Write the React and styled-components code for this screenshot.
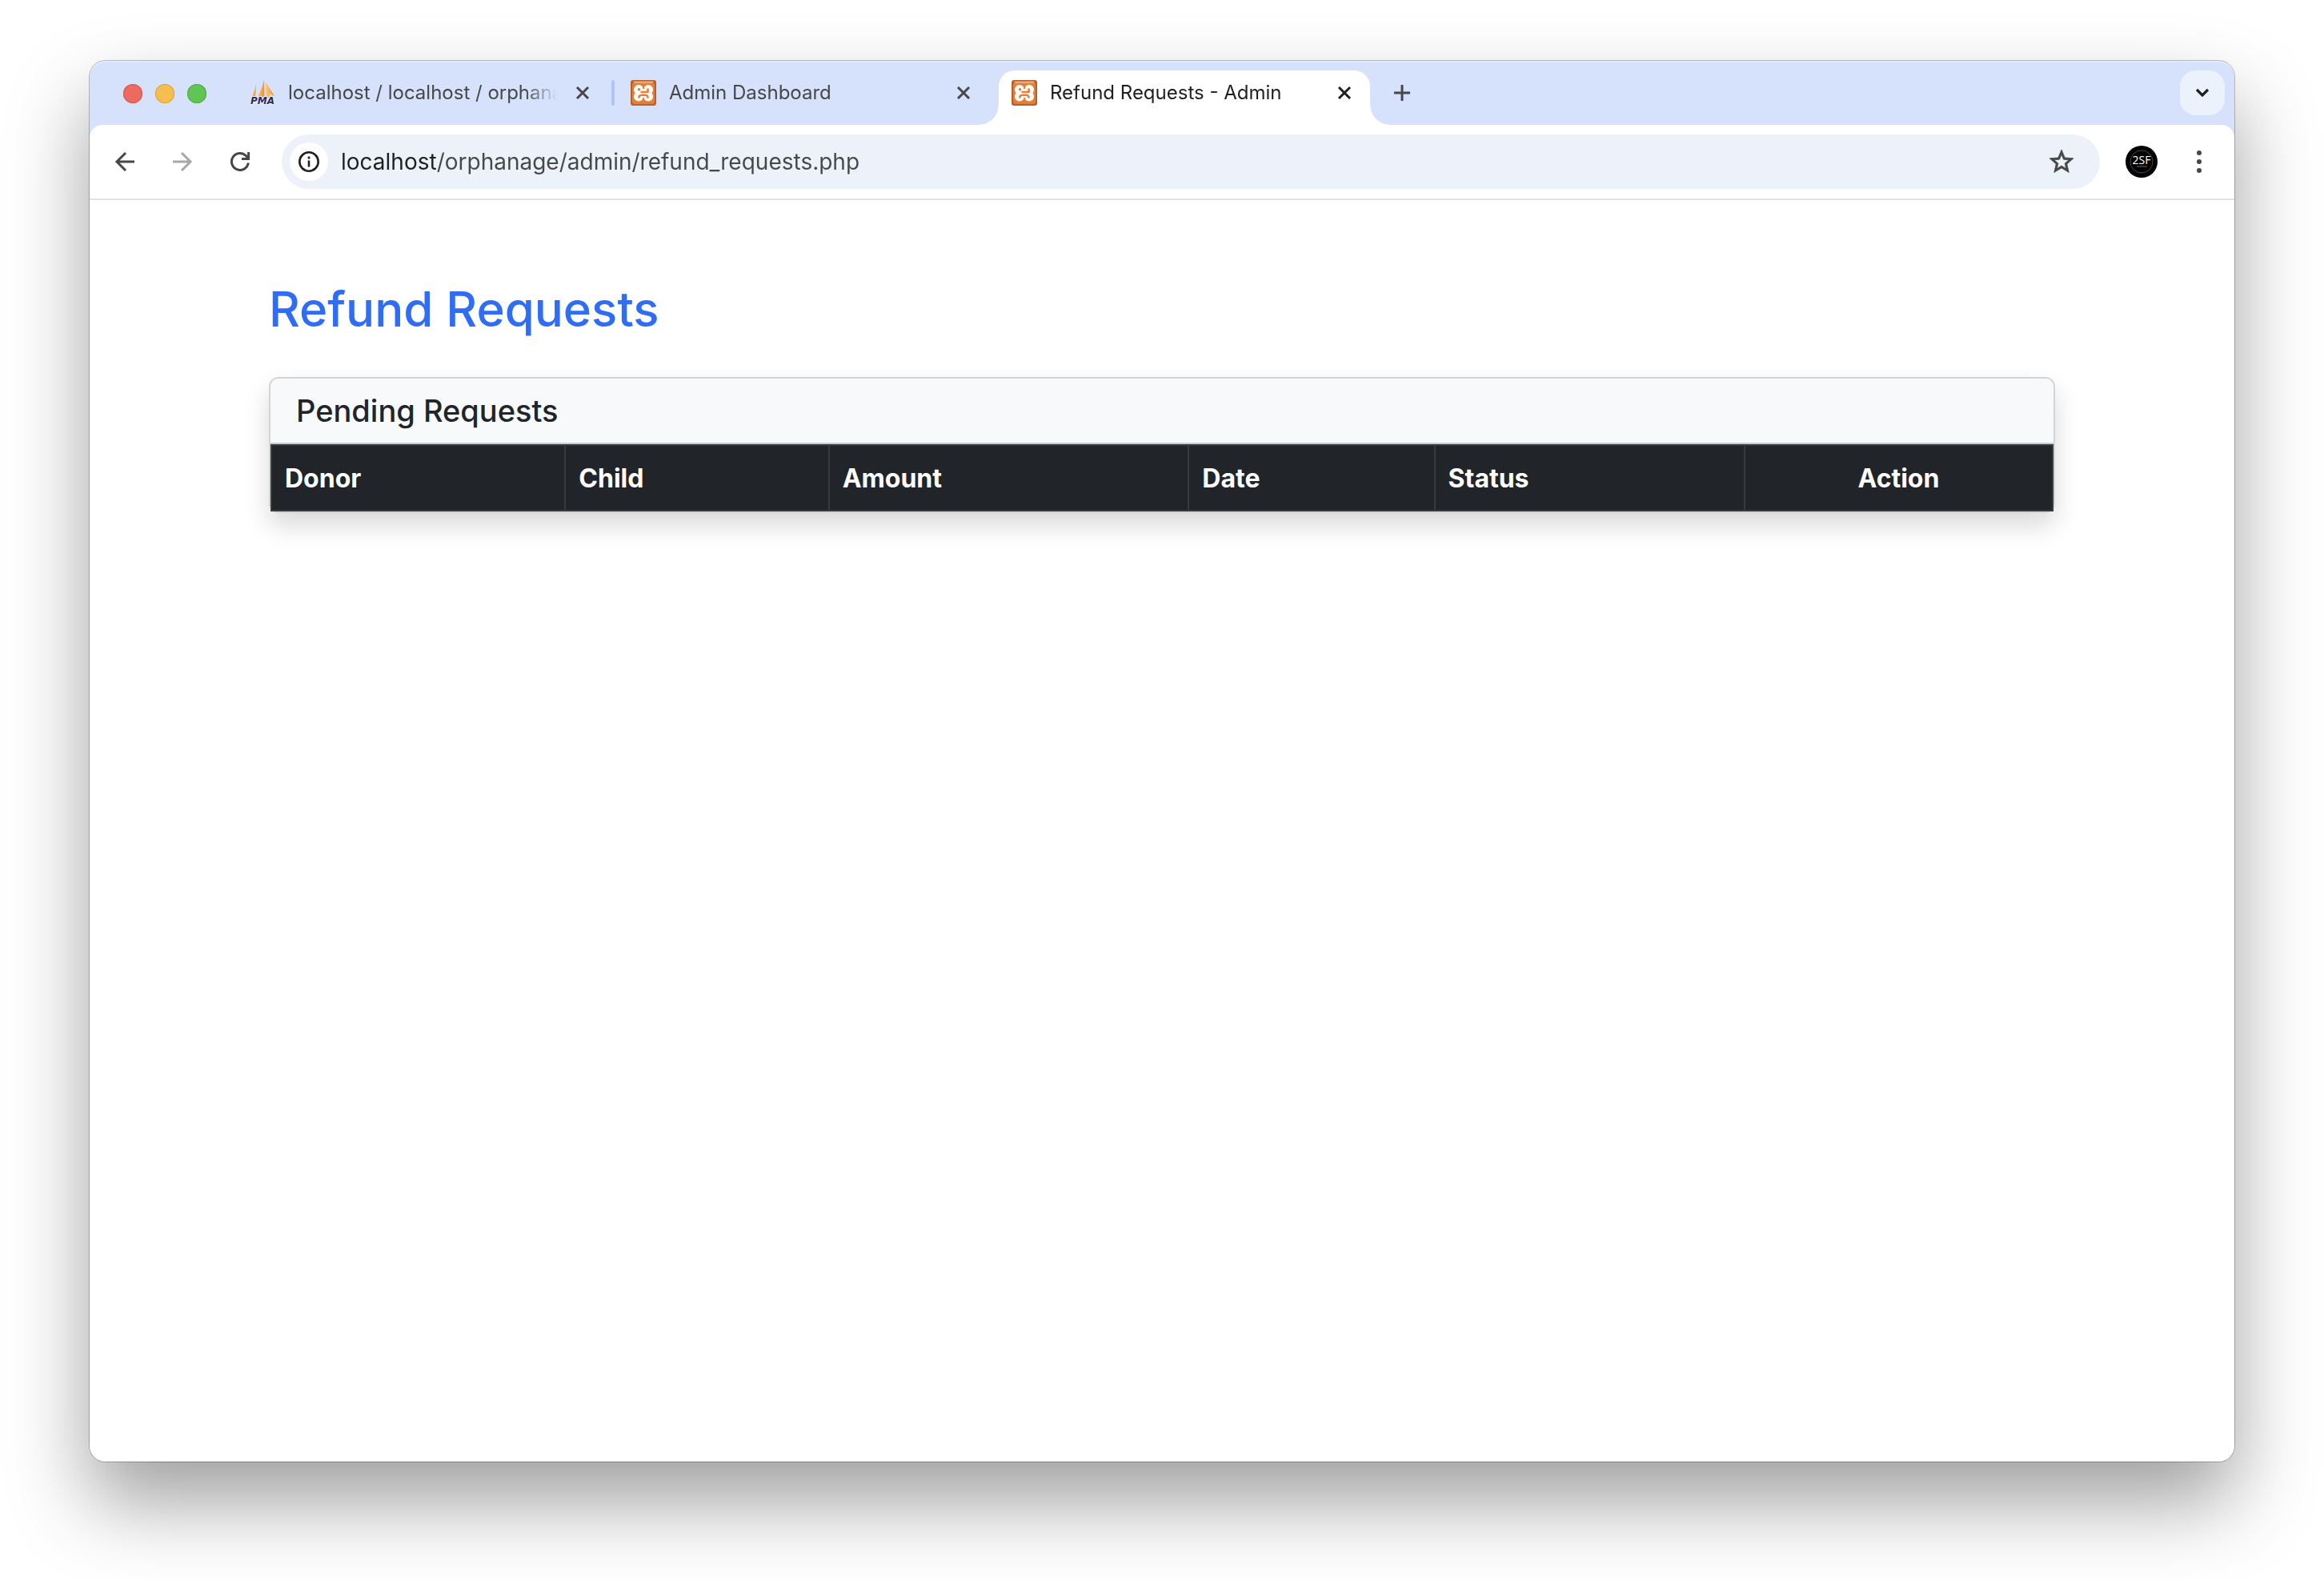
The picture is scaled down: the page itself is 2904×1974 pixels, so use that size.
import React, { useState } from "react";
import styled, { createGlobalStyle, css } from "styled-components";

const GlobalStyle = createGlobalStyle`
  *, *::before, *::after { box-sizing: border-box; }
  body {
    margin: 0;
    background: #ffffff;
    font-family: Inter, Roboto, "Liberation Sans", sans-serif;
    color: #212529;
  }
  button, input {
    margin: 0;
    padding: 0;
    border: 0;
    background: none;
    font: inherit;
    color: inherit;
  }
`;

/* ---------- window ---------- */

const Desktop = styled.div`
  display: flex;
  min-height: 100vh;
  padding: 76px 112px 148px;
`;

const BrowserWindow = styled.div`
  flex: 1;
  min-width: 0;
  display: flex;
  flex-direction: column;
  overflow: hidden;
  border-radius: 20px;
  background: #d6e1fc;
  box-shadow: 0 0 0 1px rgba(0, 0, 0, 0.24), 0 50px 100px rgba(0, 0, 0, 0.38);
`;

const TabStrip = styled.header`
  display: flex;
  align-items: flex-end;
  height: 80px;
  padding: 0 12px 0 42px;
  border-radius: 20px 20px 0 0;
  box-shadow: inset 0 2px 0 #e3ebfd;
`;

const WindowControls = styled.div`
  display: flex;
  align-items: center;
  gap: 16px;
  height: 80px;
  padding-top: 2px;
  margin-right: 38px;
`;

const WindowButton = styled.button`
  width: 24px;
  height: 24px;
  border-radius: 50%;
  background: ${(p) => p.$fill};
  box-shadow: inset 0 0 0 1px ${(p) => p.$ring};
`;

const TabList = styled.div`
  display: flex;
  align-items: flex-end;
`;

const Tab = styled.div`
  position: relative;
  display: flex;
  align-items: center;
  gap: 16px;
  width: 464px;
  height: 68px;
  padding: 0 16px 12px;
  color: #474747;

  ${(p) =>
    p.$active &&
    css`
      color: #1f1f1f;
      background: #ffffff;
      border-radius: 20px 20px 0 0;

      &::before,
      &::after {
        content: "";
        position: absolute;
        bottom: 0;
        width: 24px;
        height: 24px;
      }
      &::before {
        right: 100%;
        background: radial-gradient(circle at 0 0, transparent 23px, #ffffff 24px);
      }
      &::after {
        left: 100%;
        background: radial-gradient(circle at 100% 0, transparent 23px, #ffffff 24px);
      }
    `}
`;

const TabTitle = styled.button`
  flex: 1;
  min-width: 0;
  overflow: hidden;
  white-space: nowrap;
  text-align: left;
  font-size: 24px;
  line-height: 32px;
  mask-image: linear-gradient(to left, transparent, #000000 40px);
`;

const TabClose = styled.button`
  display: grid;
  place-items: center;
  width: 32px;
  height: 32px;
`;

const TabDivider = styled.span`
  width: 4px;
  height: 32px;
  margin: 0 4px 24px;
  border-radius: 2px;
  background: ${(p) => (p.$visible ? "#adc6f6" : "transparent")};
`;

const StripButton = styled.button`
  display: grid;
  place-items: center;
  width: 56px;
  height: 56px;
  margin: ${(p) => (p.$end ? "0 0 12px auto" : "0 0 12px 12px")};
  border-radius: 20px;
  color: ${(p) => (p.$end ? "#1f1f1f" : "#474747")};
  background: ${(p) => (p.$end ? "#ebf2fc" : "transparent")};
`;

/* ---------- toolbar ---------- */

const Toolbar = styled.form`
  display: flex;
  align-items: center;
  height: 94px;
  padding: 0 16px;
  border-bottom: 2px solid #e0e1e1;
  border-radius: 16px 16px 0 0;
  background: #ffffff;
`;

const NavButtons = styled.nav`
  display: flex;
  gap: 16px;
  margin-right: 24px;
`;

const IconButton = styled.button`
  display: grid;
  place-items: center;
  flex: none;
  width: 56px;
  height: 56px;
  color: #474747;

  &:disabled {
    color: #a8a8a8;
  }
`;

const AddressBar = styled.div`
  flex: 1;
  min-width: 0;
  display: flex;
  align-items: center;
  gap: 16px;
  height: 68px;
  padding: 0 20px 0 10px;
  border-radius: 34px;
  background: #edf2fa;
`;

const SiteInfo = styled.button`
  display: grid;
  place-items: center;
  flex: none;
  width: 48px;
  height: 48px;
  border-radius: 50%;
  color: #1f1f1f;
  background: #ffffff;
`;

const AddressInput = styled.input`
  flex: 1;
  min-width: 0;
  font-size: 28px;
  line-height: 36px;
  outline: none;
  background: linear-gradient(to right, #1f1f1f 120px, #474747 120px);
  background-clip: text;
  -webkit-text-fill-color: transparent;
`;

const Profile = styled.button`
  flex: none;
  width: 40px;
  height: 40px;
  margin: 0 24px 0 32px;

  svg {
    display: block;
  }
`;

/* ---------- page ---------- */

const Page = styled.main`
  flex: 1;
  background: #ffffff;
`;

const Container = styled.div`
  max-width: 2280px;
  margin: 0 auto;
  padding: 96px 24px 0;
`;

const PageTitle = styled.h1`
  margin: 0 0 46px;
  padding-top: 2px;
  font-size: 60px;
  line-height: 77px;
  font-weight: 500;
  color: #2f6df6;
`;

const Card = styled.section`
  border: 2px solid #d2d4d5;
  border-radius: 12px;
  background: #ffffff;
  box-shadow: 0 16px 32px rgba(0, 0, 0, 0.15);
`;

const CardHeader = styled.div`
  padding: 16px 32px;
  border-bottom: 2px solid #cacdcf;
  border-radius: 10px 10px 0 0;
  background: #f8f9fb;
`;

const CardTitle = styled.h2`
  margin: 0;
  font-size: 38px;
  line-height: 48px;
  font-weight: 500;
  color: #212529;
`;

const Table = styled.table`
  width: 100%;
  table-layout: fixed;
  border-collapse: collapse;
  color: #ffffff;
  background: #212529;
`;

const Column = styled.col`
  width: ${(p) => p.$share}%;
`;

const HeadCell = styled.th`
  padding: 17px 16px 15px;
  border: 2px solid #373b3e;
  font-size: 32px;
  line-height: 48px;
  font-weight: 700;
  text-align: ${(p) => p.$align || "left"};
`;

/* ---------- icons ---------- */

const Svg = ({ size, box = size, children, ...rest }) => (
  <svg
    width={size}
    height={size}
    viewBox={`0 0 ${box} ${box}`}
    fill="none"
    stroke="currentColor"
    strokeWidth="3"
    overflow="visible"
    aria-hidden="true"
    {...rest}
  >
    {children}
  </svg>
);

const CloseIcon = () => (
  <Svg size={16}>
    <path d="M1 1 15 15M15 1 1 15" />
  </Svg>
);

const PlusIcon = () => (
  <Svg size={20}>
    <path d="M10 0V20M0 10H20" />
  </Svg>
);

const ChevronIcon = () => (
  <Svg size={18}>
    <path d="M2 5 9 12 16 5" strokeWidth="3.2" />
  </Svg>
);

const BackIcon = () => (
  <Svg size={24}>
    <path d="M24 12H2M13 1 2 12 13 23" />
  </Svg>
);

const ForwardIcon = () => (
  <Svg size={24}>
    <path d="M0 12H22M11 1 22 12 11 23" />
  </Svg>
);

const ReloadIcon = () => (
  <Svg size={24}>
    <path d="M22.3 13.6A10.5 10.5 0 1 1 19.6 4.8L22.4 8" />
    <path d="M22.6 0V8.6H14" />
  </Svg>
);

const InfoIcon = () => (
  <Svg size={26}>
    <circle cx="13" cy="13" r="11.700" strokeWidth="2.600" />
    <path d="M13 11.500V19.500M13 6.500V9.500" strokeWidth="2.600" />
  </Svg>
);

const StarIcon = () => (
  <Svg size={36} box={24} stroke="currentColor" strokeWidth="0.500" fill="currentColor">
    <path d="M22 9.24l-7.19-.62L12 2 9.19 8.63 2 9.24l5.46 4.73L5.82 21 12 17.27 18.18 21l-1.63-7.03L22 9.24zM12 15.4l-3.76 2.27 1-4.28-3.32-2.88 4.38-.38L12 6.1l1.71 4.04 4.38.38-3.32 2.88 1 4.28L12 15.4z" />
  </Svg>
);

const MenuIcon = () => (
  <Svg size={28} stroke="none" fill="currentColor">
    <circle cx="14" cy="3" r="3" />
    <circle cx="14" cy="14" r="3" />
    <circle cx="14" cy="25" r="3" />
  </Svg>
);

const AvatarIcon = () => (
  <Svg size={40} stroke="none">
    <circle cx="20" cy="20" r="20" fill="#000000" />
    <circle cx="20" cy="20" r="14" stroke="#4a4a4a" strokeWidth="1" />
    <text x="20" y="23" textAnchor="middle" fontFamily="Open Sans, sans-serif" fontSize="14" fill="#ffffff">
      2SF
    </text>
    <path d="M14 26H27" stroke="#6a6a6a" strokeWidth="1" />
  </Svg>
);

const PmaIcon = () => (
  <Svg size={32} stroke="none">
    <defs>
      <linearGradient id="sail" x1="0" x2="1">
        <stop offset="0" stopColor="#f9c98c" />
        <stop offset="1" stopColor="#f28c1e" />
      </linearGradient>
    </defs>
    <g fill="url(#sail)">
      <path d="M8 5C7 11 5 17 2 22H7Z" />
      <path d="M18 0C16 9 13 16 9 22H18.500Z" />
      <path d="M20 3C19.500 10 20 16 21 22H27L24 17 31 20C27 14 24 8 20 3Z" />
    </g>
    <text
      x="16"
      y="30"
      textAnchor="middle"
      fontFamily="DejaVu Sans, sans-serif"
      fontSize="12"
      fontWeight="700"
      fontStyle="italic"
      fill="#2d2b5c"
      stroke="#eef2fd"
      strokeWidth="2"
      paintOrder="stroke"
    >
      PMA
    </text>
  </Svg>
);

const XamppIcon = () => (
  <Svg size={32} stroke="none">
    <rect width="32" height="32" rx="3" fill="#b5602a" />
    <rect x="2" y="3" width="28" height="27" rx="3" fill="#e67e35" />
    <path d="M3 1.500H29L27 4H5Z" fill="#e3ac86" />
    <g fill="#ffffff">
      <circle cx="10" cy="12" r="6" />
      <circle cx="22" cy="12" r="6" />
      <circle cx="10" cy="20.500" r="6" />
      <circle cx="22" cy="20.500" r="6" />
      <path d="M10 12H22V22H10Z" />
    </g>
    <path d="M16 5V11M16 22V28" stroke="#e67e35" strokeWidth="2" />
    <circle cx="10.500" cy="11.800" r="1.800" fill="#e67e35" />
    <path
      d="M21.500 10.500V15H12.500M10.500 22.500V20.500C11 18.800 13 18.800 15 18.800H18C20.500 18.800 21.500 19.500 21.500 22.500"
      stroke="#e67e35"
      strokeWidth="2.600"
    />
  </Svg>
);

/* ---------- data ---------- */

const TABS = [
  { title: "localhost / localhost / orphanage", Icon: PmaIcon, divider: true },
  { title: "Admin Dashboard", Icon: XamppIcon },
  { title: "Refund Requests - Admin", Icon: XamppIcon, active: true },
];

const COLUMNS = [
  { label: "Donor", share: 16.5 },
  { label: "Child", share: 14.8 },
  { label: "Amount", share: 20.2 },
  { label: "Date", share: 13.8 },
  { label: "Status", share: 17.4 },
  { label: "Action", share: 17.3, align: "center" },
];

export default function App() {
  const [url, setUrl] = useState("localhost/orphanage/admin/refund_requests.php");

  return (
    <>
      <GlobalStyle />
      <Desktop>
        <BrowserWindow>
          <TabStrip>
            <WindowControls>
              <WindowButton aria-label="Close window" $fill="#ec6a5e" $ring="#d5574c" />
              <WindowButton aria-label="Minimize window" $fill="#f4bf4f" $ring="#d9a33c" />
              <WindowButton aria-label="Zoom window" $fill="#61c554" $ring="#4fa943" />
            </WindowControls>
            <TabList>
              {TABS.map(({ title, Icon, active, divider }, i) => (
                <React.Fragment key={title}>
                  <Tab $active={active}>
                    <Icon />
                    <TabTitle>{title}</TabTitle>
                    <TabClose aria-label={`Close ${title}`}>
                      <CloseIcon />
                    </TabClose>
                  </Tab>
                  {i < TABS.length - 1 && <TabDivider $visible={divider} />}
                </React.Fragment>
              ))}
            </TabList>
            <StripButton aria-label="New tab">
              <PlusIcon />
            </StripButton>
            <StripButton $end aria-label="Search tabs">
              <ChevronIcon />
            </StripButton>
          </TabStrip>

          <Toolbar onSubmit={(e) => e.preventDefault()}>
            <NavButtons aria-label="History">
              <IconButton type="button" aria-label="Back">
                <BackIcon />
              </IconButton>
              <IconButton type="button" aria-label="Forward" disabled>
                <ForwardIcon />
              </IconButton>
              <IconButton type="button" aria-label="Reload">
                <ReloadIcon />
              </IconButton>
            </NavButtons>
            <AddressBar>
              <SiteInfo type="button" aria-label="View site information">
                <InfoIcon />
              </SiteInfo>
              <AddressInput
                type="text"
                aria-label="Address"
                value={url}
                onChange={(e) => setUrl(e.target.value)}
              />
              <IconButton type="button" aria-label="Bookmark this page">
                <StarIcon />
              </IconButton>
            </AddressBar>
            <Profile type="button" aria-label="Profile">
              <AvatarIcon />
            </Profile>
            <IconButton type="button" aria-label="Menu">
              <MenuIcon />
            </IconButton>
          </Toolbar>

          <Page>
            <Container>
              <PageTitle>Refund Requests</PageTitle>
              <Card>
                <CardHeader>
                  <CardTitle id="pending">Pending Requests</CardTitle>
                </CardHeader>
                <Table aria-labelledby="pending">
                  <colgroup>
                    {COLUMNS.map((c) => (
                      <Column key={c.label} $share={c.share} />
                    ))}
                  </colgroup>
                  <thead>
                    <tr>
                      {COLUMNS.map((c) => (
                        <HeadCell key={c.label} scope="col" $align={c.align}>
                          {c.label}
                        </HeadCell>
                      ))}
                    </tr>
                  </thead>
                </Table>
              </Card>
            </Container>
          </Page>
        </BrowserWindow>
      </Desktop>
    </>
  );
}
